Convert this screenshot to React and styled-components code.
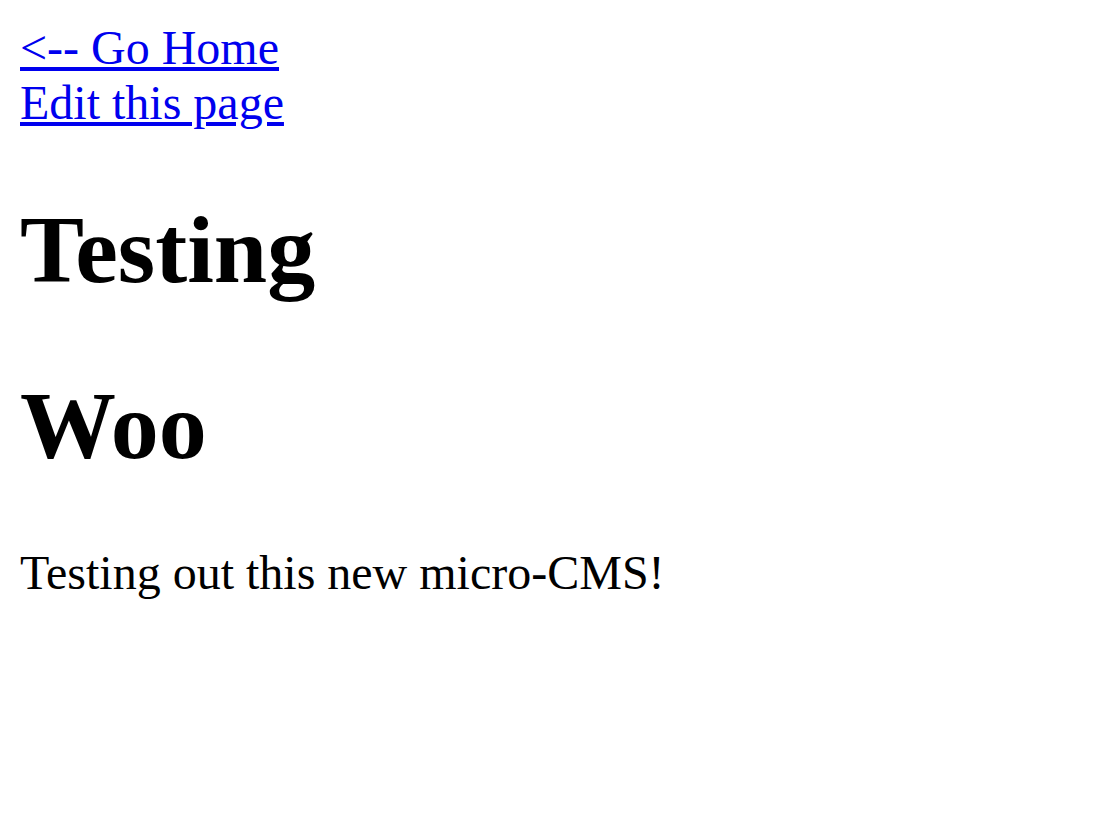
import React from "react";
import styled, { createGlobalStyle } from "styled-components";

const GlobalStyle = createGlobalStyle`
  body {
    margin: 20px;
    background: #ffffff;
    color: #000000;
    font-family: "Liberation Serif", "Times New Roman", serif;
    font-size: 48px;
  }
`;

const Nav = styled.nav`
  display: flex;
  flex-direction: column;
  align-items: flex-start;
`;

const NavLink = styled.a`
  color: #0000ee;
  text-decoration: underline;
  cursor: pointer;
`;

const Title = styled.h1`
  font-size: 2em;
  font-weight: bold;
  margin: 0.67em 0;
`;

const Body = styled.p`
  margin: 1em 0;
`;

export default function App() {
  return (
    <>
      <GlobalStyle />
      <Nav>
        <NavLink href="#">&lt;-- Go Home</NavLink>
        <NavLink href="#">Edit this page</NavLink>
      </Nav>
      <article>
        <Title>Testing</Title>
        <Title>Woo</Title>
        <Body>Testing out this new micro-CMS!</Body>
      </article>
    </>
  );
}
